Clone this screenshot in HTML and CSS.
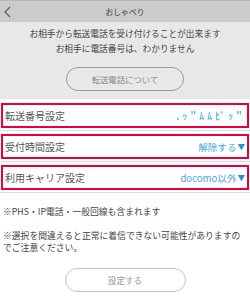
FILE: index.html
```html
<!DOCTYPE html>
<html lang="ja">
<head>
<meta charset="utf-8">
<link rel="stylesheet" href="styles.css">
</head>
<body>
<header class="topbar">
  <span class="back">
    <svg width="10" height="12" viewBox="0 0 10 12"><polyline points="7,1 2,6 7,11" fill="none" stroke="#555" stroke-width="1.1"/></svg>
  </span>
  <h1 class="title">おしゃべり</h1>
  <span></span>
</header>
<section class="intro">
  <p class="intro-text">お相手から転送電話を受け付けることが出来ます<br>お相手に電話番号は、わかりません</p>
  <button class="pill pill-about">転送電話について</button>
</section>
<ul class="rows">
  <li class="row"><div class="box"><span class="label">転送番号設定</span><span class="value blur">.ｯ"ﾑﾑﾋﾞｯ"</span></div></li>
  <li class="row"><div class="box"><span class="label">受付時間設定</span><span class="value">解除する<span class="tri">▼</span></span></div></li>
  <li class="row"><div class="box"><span class="label">利用キャリア設定</span><span class="value">docomo以外<span class="tri">▼</span></span></div></li>
</ul>
<section class="notes">
  <p class="note">※PHS・IP電話・一般回線も含まれます</p>
  <p class="note note-warn">※選択を間違えると正常に着信できない可能性がありますのでご注意ください。</p>
  <button class="pill pill-submit">設定する</button>
</section>
</body>
</html>
```
FILE: styles.css
```css
* { box-sizing: border-box; }
html, body { margin: 0; padding: 0; background: #fff; }
body {
  width: 250px;
  font-family: "Noto Sans CJK JP", "Noto Sans", sans-serif;
  color: #444;
}
.topbar {
  height: 22px;
  background: #cbcbcb;
  border-top: 1px solid #b8b8b8;
  display: grid;
  grid-template-columns: 20px 1fr 20px;
  align-items: center;
}
.back { display: flex; align-items: center; padding-left: 3px; }
.back svg { display: block; }
.title {
  margin: 0;
  text-align: center;
  font-size: 7.8px;
  font-weight: normal;
  color: #444;
}
.intro {
  background: #e8e8e8;
  padding: 4px 0 8px;
  display: flex;
  flex-direction: column;
  align-items: center;
}
.intro-text {
  margin: 0;
  font-size: 8.7px;
  line-height: 15px;
  text-align: center;
  color: #444;
}
.pill {
  font-family: inherit;
  border-radius: 12px;
  height: 24px;
  padding: 0;
  cursor: pointer;
}
.pill-about {
  margin-top: 11px;
  width: 118px;
  background: #e8e8e8;
  border: 1px solid #9a9a9a;
  color: #888;
  font-size: 8.4px;
}
.rows {
  list-style: none;
  margin: 0;
  padding: 1px 0 0;
}
.row {
  height: 31px;
  border-bottom: 1px solid #dcdcdc;
  padding: 3px 1px 2px;
}
.box {
  height: 25px;
  border: 2px solid #e8003d;
  display: flex;
  align-items: center;
  justify-content: space-between;
  padding: 0 2px 0 2px;
}
.label { font-size: 10px; color: #555; }
.value { font-size: 9.6px; color: #4aa6e0; display: flex; align-items: center; }
.tri { font-size: 7.5px; color: #2b8fdc; margin-left: 1px; }
.blur {
  filter: blur(0.6px);
  color: #55bdf0;
  letter-spacing: 3px;
  font-size: 10px;
  font-weight: bold;
  padding-right: 0;
}
.notes {
  padding: 13px 3px 0;
  display: flex;
  flex-direction: column;
  align-items: center;
}
.note {
  margin: 0;
  align-self: stretch;
  font-size: 8.8px;
  line-height: 12px;
  color: #444;
}
.note-warn { margin-top: 12px; }
.pill-submit {
  margin-top: 14px;
  width: 121px;
  background: #fff;
  border: 1px solid #c4c4c4;
  color: #999;
  font-size: 8.6px;
}
```
